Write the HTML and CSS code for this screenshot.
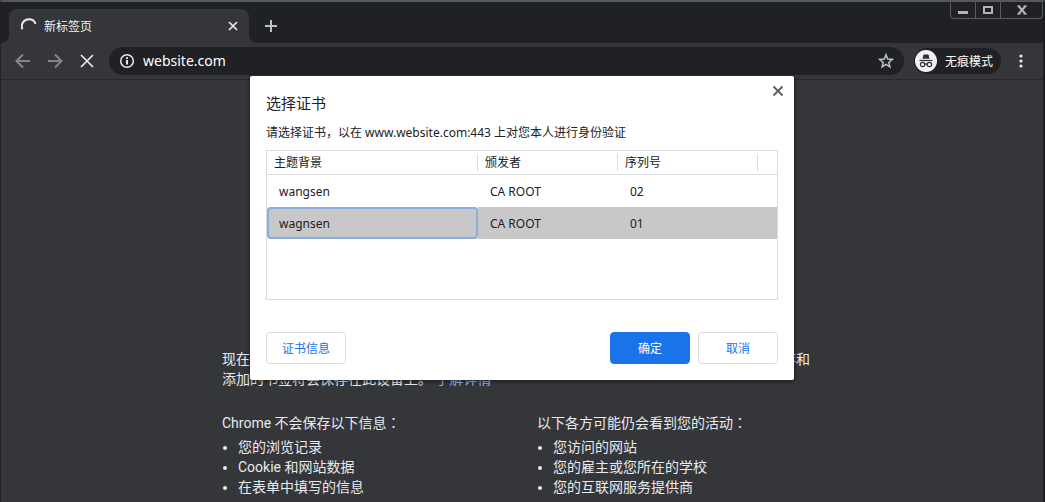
FILE: index.html
```html
<!DOCTYPE html>
<html lang="zh-CN">
<head>
<meta charset="utf-8">
<title>新标签页</title>
<link rel="stylesheet" href="styles.css">
</head>
<body>
<div class="window">
  <header class="tab-strip">
    <div class="tab">
      <svg class="spinner" viewBox="0 0 16 16"><path d="M1.500 11.200A7 7 0 0 1 8 1.200A7 7 0 0 1 14.600 5.800"/></svg>
      <span class="tab-title">新标签页</span>
      <button class="icon-button tab-close" aria-label="关闭标签页"><svg width="10" height="10" viewBox="0 0 10 10"><path d="M1 1l8 8M9 1l-8 8"/></svg></button>
    </div>
    <button class="icon-button new-tab" aria-label="新建标签页"><svg width="12" height="12" viewBox="0 0 12 12"><path d="M6 0v12M0 6h12"/></svg></button>
    <div class="window-controls">
      <button class="control" aria-label="最小化"><svg width="10" height="10" viewBox="0 0 10 10"><path d="M0 7.500h10" stroke-width="3"/></svg></button>
      <button class="control" aria-label="最大化"><svg width="10" height="10" viewBox="0 0 10 10"><path d="M1 2h8v6H1z" stroke-width="2"/></svg></button>
      <button class="control control-close" aria-label="关闭"><svg width="10" height="10" viewBox="0 0 10 10"><path d="M1.500 1l7 8M8.500 1l-7 8" stroke-width="2"/><path d="M0 1h3.500M6.500 1H10M0 9h3.500M6.500 9H10" stroke-width="1"/></svg></button>
    </div>
  </header>
  <div class="toolbar">
    <nav class="nav">
      <button class="icon-button nav-off" aria-label="后退"><svg width="16" height="16" viewBox="0 0 16 16"><path d="M15 8H2M8 1.500L1.500 8 8 14.500"/></svg></button>
      <button class="icon-button nav-off" aria-label="前进"><svg width="16" height="16" viewBox="0 0 16 16"><path d="M1 8h13M8 1.500L14.500 8 8 14.500"/></svg></button>
      <button class="icon-button stop" aria-label="停止加载"><svg width="16" height="16" viewBox="0 0 16 16"><path d="M2 2l12 12M14 2L2 14"/></svg></button>
    </nav>
    <div class="omnibox">
      <svg class="info" width="16" height="16" viewBox="0 0 16 16"><circle cx="8" cy="8" r="6.300"/><path d="M8 7v4.500M8 4.200v1.800" stroke-width="2"/></svg>
      <input class="address" type="text" value="website.com" aria-label="地址栏">
      <button class="icon-button star" aria-label="为此标签页添加书签"><svg width="16" height="16" viewBox="0 0 16 16"><path d="M8 1.800l1.700 4.300 4.600.3-3.500 3 1.100 4.500L8 11.400l-3.900 2.500 1.100-4.500-3.500-3 4.600-.3z"/></svg></button>
    </div>
    <button class="incognito">
      <svg width="22" height="22" viewBox="0 0 22 22"><circle cx="11" cy="11" r="11" fill="#f1f3f4"/><path d="M7.500 8.800l1-4 1.200-.6 1.300.5 1.300-.5 1.200.6 1 4z" fill="#303134"/><path d="M4.500 10.500h13" stroke="#303134" stroke-width="1.200"/><g fill="none" stroke="#303134" stroke-width="1.200"><circle cx="7.600" cy="14.500" r="2.200"/><circle cx="14.400" cy="14.500" r="2.200"/><path d="M9.800 14.300q1.200-.8 2.400 0"/></g></svg>
      <span>无痕模式</span>
    </button>
    <button class="icon-button menu" aria-label="菜单"><svg width="4" height="14" viewBox="0 0 4 14"><circle cx="2" cy="2" r="1.600"/><circle cx="2" cy="7" r="1.600"/><circle cx="2" cy="12" r="1.600"/></svg></button>
  </div>
  <main class="page">
    <div class="content">
      <p class="intro">现在，您可以私密浏览了，此设备的其他用户不会看到您的活动。不过，您的下载内容会保存和添加的书签将会保存在此设备上。 <a class="learn-more" href="#">了解详情</a></p>
      <div class="columns">
        <section>
          <h2 class="list-title">Chrome 不会保存以下信息<span class="mark" lang="zh-TW">：</span></h2>
          <ul class="list"><li>您的浏览记录</li><li>Cookie 和网站数据</li><li>在表单中填写的信息</li></ul>
        </section>
        <section>
          <h2 class="list-title">以下各方可能仍会看到您的活动<span class="mark" lang="zh-TW">：</span></h2>
          <ul class="list"><li>您访问的网站</li><li>您的雇主或您所在的学校</li><li>您的互联网服务提供商</li></ul>
        </section>
      </div>
    </div>
  </main>
  <div class="dialog" role="dialog" aria-labelledby="dialog-title">
    <button class="icon-button dialog-close" aria-label="关闭对话框"><svg width="12" height="12" viewBox="0 0 12 12"><path d="M1.500 1.500l9 9M10.500 1.500l-9 9"/></svg></button>
    <h1 class="dialog-title" id="dialog-title">选择证书</h1>
    <p class="dialog-text">请选择证书，以在 www.website.com:443 上对您本人进行身份验证</p>
    <div class="table-frame">
      <table class="certs">
        <colgroup><col class="col-subject"><col class="col-mid"><col class="col-mid"><col></colgroup>
        <thead><tr><th><span>主题背景</span></th><th><span>颁发者</span></th><th><span>序列号</span></th><th></th></tr></thead>
        <tbody>
          <tr><td>wangsen</td><td>CA ROOT</td><td>02</td><td></td></tr>
          <tr class="selected"><td class="focused">wagnsen</td><td>CA ROOT</td><td>01</td><td></td></tr>
        </tbody>
      </table>
    </div>
    <div class="actions">
      <button class="button">证书信息</button>
      <button class="button primary">确定</button>
      <button class="button">取消</button>
    </div>
  </div>
</div>
</body>
</html>
```
FILE: styles.css
```css
* { box-sizing: border-box; }

body {
  margin: 0;
  background: #35363a;
  font-family: "Noto Sans", "Noto Sans CJK SC", sans-serif;
  font-size: 12px;
}

button, input { font: inherit; }
svg { display: block; flex: none; }
h1, h2, p, ul { margin: 0; font-weight: 400; }

.window {
  position: relative;
  display: flex;
  flex-direction: column;
  height: 100vh;
  overflow: hidden;
  border-top: 2px solid #55585a;
  border-left: 1px solid #202124;
  border-right: 2px solid #1b1c1f;
}

.tab-strip {
  display: flex;
  flex: none;
  height: 41px;
  padding-left: 8px;
  background: #202124;
}

.tab {
  position: relative;
  display: flex;
  align-items: center;
  width: 240px;
  margin-top: 7px;
  padding: 0 8px 0 12px;
  background: #35363a;
  border-radius: 8px 8px 0 0;
  color: #f1f3f4;
}

.tab::before, .tab::after {
  content: "";
  position: absolute;
  bottom: 0;
  width: 8px;
  height: 8px;
}

.tab::before {
  right: 100%;
  background: radial-gradient(circle at 0 0, #202124 8px, #35363a 8px);
}

.tab::after {
  left: 100%;
  background: radial-gradient(circle at 100% 0, #202124 8px, #35363a 8px);
}

.icon-button {
  display: flex;
  align-items: center;
  justify-content: center;
  flex: none;
  width: 24px;
  height: 24px;
  padding: 0;
  border: 0;
  background: none;
  color: #e8eaed;
}

.icon-button path {
  fill: none;
  stroke: currentColor;
  stroke-width: 2;
}

.spinner {
  width: 16px;
  height: 16px;
  fill: none;
  stroke: #e8eaed;
  stroke-width: 2;
}

.tab-title { flex: 1; margin-left: 7px; }
.tab-close { width: 16px; }
.tab-close path, .stop path { stroke-width: 1.7; }
.new-tab { margin: 12px 0 0 10px; color: #bdc1c6; }

.window-controls {
  display: flex;
  height: 17px;
  margin-left: auto;
  border: 1px solid #5a5b5d;
  border-top: 0;
  border-radius: 0 0 4px 4px;
}

.control {
  display: flex;
  align-items: center;
  justify-content: center;
  width: 25px;
  padding: 0;
  border: 0;
  border-right: 1px solid #5a5b5d;
  background: none;
}

.control-close { width: 41px; border-right: 0; }
.control path { fill: none; stroke: #b4b4b4; }

.toolbar {
  display: flex;
  align-items: center;
  flex: none;
  height: 37px;
  padding: 0 14px 0 10px;
  border-bottom: 1px solid #28292c;
  background: #35363a;
}

.nav { display: flex; gap: 8px; }
.nav-off { color: #85868a; }

.omnibox {
  display: flex;
  align-items: center;
  flex: 1;
  height: 28px;
  margin-left: 10px;
  padding: 0 6px 0 10px;
  border-radius: 14px;
  background: #202124;
}

.info {
  fill: none;
  stroke: #e8eaed;
  stroke-width: 1.5;
}

.address {
  flex: 1;
  min-width: 0;
  height: 28px;
  margin-left: 8px;
  padding: 0 0 2px;
  border: 0;
  outline: 0;
  background: none;
  color: #ffffff;
  font-size: 14px;
}

.star { color: #bdc1c6; }
.star path { stroke-width: 1.5; }

.incognito {
  display: flex;
  align-items: center;
  gap: 8px;
  height: 26px;
  margin-left: 10px;
  padding: 0 8px 0 1px;
  border: 0;
  border-radius: 13px;
  background: #202124;
  color: #ffffff;
}

.menu { width: 16px; margin-left: 12px; }
.menu svg { fill: #e8eaed; }

.page {
  flex: 1;
  padding-top: 269px;
  color: #e8eaed;
  font-family: Roboto, "Noto Sans CJK SC", sans-serif;
  font-size: 14px;
  line-height: 20px;
}

.content { width: 600px; max-width: 100%; margin: 0 auto; }
.learn-more { color: #8ab4f8; text-decoration: none; }

.mark {
  font-family: "Noto Sans CJK TC", sans-serif;
  line-height: 1;
}

.columns {
  display: grid;
  grid-template-columns: 1fr 1fr;
  gap: 30px;
  margin-top: 24px;
}

.list-title { font-size: 14px; line-height: 20px; }
.list { margin-top: 4px; padding-left: 16px; }

.dialog {
  position: absolute;
  top: 74px;
  left: 50%;
  width: 544px;
  margin-left: -272px;
  padding: 16px;
  border-radius: 2px;
  background: #ffffff;
  box-shadow: 0 1px 4px #00000099;
  color: #202124;
}

.dialog-close {
  position: absolute;
  top: 3px;
  right: 4px;
  color: #5f6368;
}

.dialog-title { font-size: 15px; line-height: 22px; }
.dialog-text { margin-top: 10px; line-height: 18px; }

.table-frame {
  height: 150px;
  margin-top: 8px;
  border: 1px solid #dadce0;
}

.certs {
  width: 100%;
  table-layout: fixed;
  border-collapse: separate;
  border-spacing: 0;
}

.col-subject { width: 211px; }
.col-mid { width: 140px; }

.certs th {
  height: 24px;
  padding: 0;
  border-bottom: 1px solid #dadce0;
  font-weight: 400;
  text-align: left;
}

.certs th span {
  display: block;
  padding-left: 7px;
  border-right: 1px solid #dadce0;
  line-height: 17px;
}

.certs td { height: 32px; padding: 0 12px; }
.selected { background: #c8c8c8; }

.focused {
  border-radius: 4px;
  outline: 2px solid #8aafdf;
  outline-offset: -2px;
}

.actions { display: flex; gap: 8px; margin-top: 32px; }

.button {
  width: 80px;
  height: 32px;
  padding: 0;
  border: 1px solid #dadce0;
  border-radius: 4px;
  background: #ffffff;
  color: #1a73e8;
}

.primary {
  margin-left: auto;
  border-color: #1a73e8;
  background: #1a73e8;
  color: #ffffff;
}
```
